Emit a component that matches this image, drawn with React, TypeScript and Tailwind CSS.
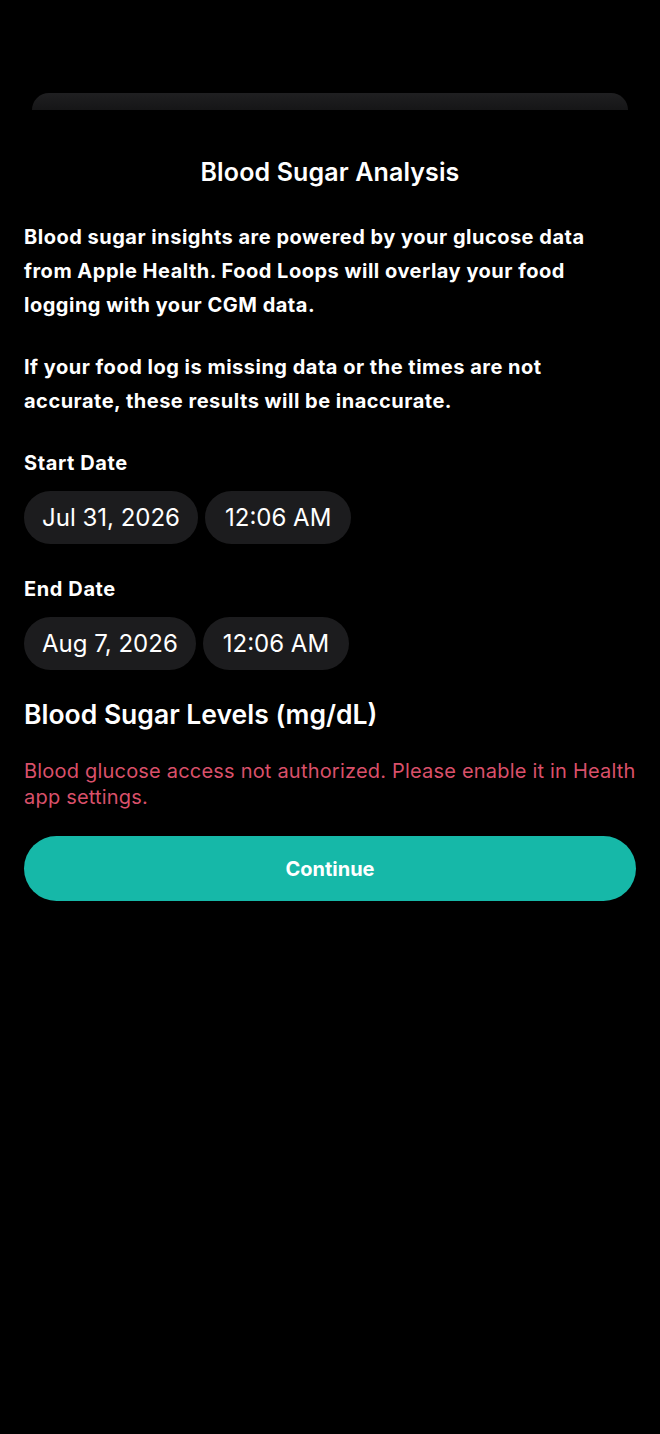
export default function App() {
  return (
    <div
      className="min-h-[1434px] w-full bg-black text-white"
      style={{ fontFamily: "Inter, 'Noto Sans', sans-serif" }}
    >
      <div className="pt-[93px]">
        {/* sheet peeking behind */}
        <div className="mx-[32px] h-[17px] rounded-t-[30px] bg-gradient-to-b from-[#1f1f21] to-[#161617]" />
      </div>

      <div className="px-6">
        <h1 className="mt-[46px] text-center text-[25px] font-semibold leading-8 tracking-[0.005em]">
          Blood Sugar Analysis
        </h1>

        <p className="mt-[32px] text-[20px] font-bold leading-[34px] tracking-[0.025em]">
          Blood sugar insights are powered by your glucose data from Apple
          Health. Food Loops will overlay your food logging with your CGM data.
        </p>
        <p className="mt-[28px] text-[20px] font-bold leading-[34px] tracking-[0.025em]">
          If your food log is missing data or the times are not accurate, these
          results will be inaccurate.
        </p>

        <div className="mt-[28px] text-[20px] font-bold leading-[34px] tracking-[0.03em]">Start Date</div>
        <div className="mt-[11px] flex gap-[7px]">
          <span className="flex h-[53px] items-center rounded-full bg-[#1c1c1e] px-[18px] text-[24px]">
            Jul 31, 2026
          </span>
          <span className="flex h-[53px] items-center rounded-full bg-[#1c1c1e] px-[20px] text-[24px]">
            12:06 AM
          </span>
        </div>

        <div className="mt-[28px] text-[20px] font-bold leading-[34px] tracking-[0.03em]">End Date</div>
        <div className="mt-[11px] flex gap-[7px]">
          <span className="flex h-[53px] items-center rounded-full bg-[#1c1c1e] px-[18px] text-[24px]">
            Aug 7, 2026
          </span>
          <span className="flex h-[53px] items-center rounded-full bg-[#1c1c1e] px-[20px] text-[24px]">
            12:06 AM
          </span>
        </div>

        <h2 className="mt-[26px] text-[26.5px] font-semibold leading-9">
          Blood Sugar Levels (mg/dL)
        </h2>

        <p className="mt-[26px] text-[20px] leading-[26px] tracking-[0.01em] text-[#d9506a]">
          Blood glucose access not authorized. Please enable it in Health app
          settings.
        </p>

        <button className="mt-[26px] flex h-[65px] w-full items-center justify-center rounded-full bg-[#16b8a8] text-[20px] font-bold text-white">
          Continue
        </button>
      </div>
    </div>
  );
}
